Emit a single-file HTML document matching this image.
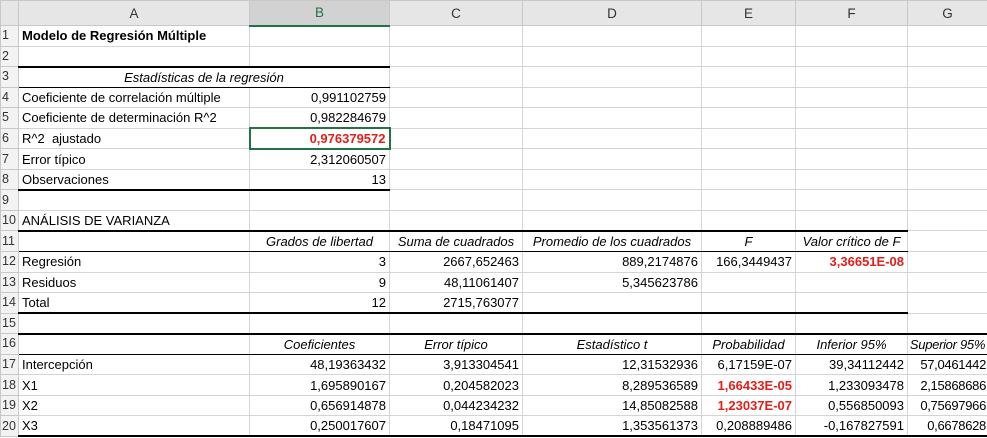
<!DOCTYPE html>
<html><head><meta charset="utf-8"><style>
body{margin:0;background:#fff;}
table{border-collapse:collapse;table-layout:fixed;width:987px;font-family:"Liberation Sans",sans-serif;font-size:13px;color:#000;}
tr{height:20.55px}
td{border:1px solid #d4d4d4;padding:0 3px;white-space:nowrap;overflow:visible;line-height:17px;box-sizing:border-box;}
tr.h{height:25px}
tr.h td{background:#e6e6e6;text-align:center;color:#333;border-color:#c8c8c8;font-size:13.5px;}
tr.h td.sel{background:#d2d2d2;color:#217346;border-bottom:2px solid #217346;}
td.n{background:#f3f3f3;color:#333;padding:0 1px;font-size:12.5px;border-color:#c8c8c8;}
.r{text-align:right}.c{text-align:center}.i{font-style:italic}.b{font-weight:bold}.red{color:#e0201b;font-weight:bold}
.tb{border-bottom:2px solid #000}.t1{border-bottom:1px solid #000}
.g{border:2px solid #217346}
.sp{padding:0 1px;letter-spacing:-0.3px}
</style></head><body>
<table>
<colgroup><col style="width:18px"><col style="width:231px"><col style="width:140px"><col style="width:133px"><col style="width:179px"><col style="width:94px"><col style="width:112px"><col style="width:80px"></colgroup>
<tr class="h"><td></td><td>A</td><td class="sel">B</td><td>C</td><td>D</td><td>E</td><td>F</td><td>G</td></tr>
<tr><td class="n">1</td><td class="b">Modelo de Regresión Múltiple</td><td></td><td></td><td></td><td></td><td></td><td></td></tr>
<tr><td class="n">2</td><td class="tb"></td><td class="tb"></td><td></td><td></td><td></td><td></td><td></td></tr>
<tr><td class="n">3</td><td colspan="2" class="c i t1">Estadísticas de la regresión</td><td></td><td></td><td></td><td></td><td></td></tr>
<tr><td class="n">4</td><td>Coeficiente de correlación múltiple</td><td class="r">0,991102759</td><td></td><td></td><td></td><td></td><td></td></tr>
<tr><td class="n">5</td><td>Coeficiente de determinación R^2</td><td class="r">0,982284679</td><td></td><td></td><td></td><td></td><td></td></tr>
<tr><td class="n">6</td><td>R^2 &nbsp;ajustado</td><td class="r red g">0,976379572</td><td></td><td></td><td></td><td></td><td></td></tr>
<tr><td class="n">7</td><td>Error típico</td><td class="r">2,312060507</td><td></td><td></td><td></td><td></td><td></td></tr>
<tr><td class="n">8</td><td class="tb">Observaciones</td><td class="r tb">13</td><td></td><td></td><td></td><td></td><td></td></tr>
<tr><td class="n">9</td><td></td><td></td><td></td><td></td><td></td><td></td><td></td></tr>
<tr><td class="n">10</td><td class="tb">ANÁLISIS DE VARIANZA</td><td class="tb"></td><td class="tb"></td><td class="tb"></td><td class="tb"></td><td class="tb"></td><td></td></tr>
<tr><td class="n">11</td><td class="t1"></td><td class="c i t1">Grados de libertad</td><td class="c i t1">Suma de cuadrados</td><td class="c i t1">Promedio de los cuadrados</td><td class="c i t1">F</td><td class="c i t1">Valor crítico de F</td><td></td></tr>
<tr><td class="n">12</td><td>Regresión</td><td class="r">3</td><td class="r">2667,652463</td><td class="r">889,2174876</td><td class="r">166,3449437</td><td class="r red">3,36651E-08</td><td></td></tr>
<tr><td class="n">13</td><td>Residuos</td><td class="r">9</td><td class="r">48,11061407</td><td class="r">5,345623786</td><td></td><td></td><td></td></tr>
<tr><td class="n">14</td><td class="tb">Total</td><td class="r tb">12</td><td class="r tb">2715,763077</td><td class="tb"></td><td class="tb"></td><td class="tb"></td><td></td></tr>
<tr><td class="n">15</td><td class="tb"></td><td class="tb"></td><td class="tb"></td><td class="tb"></td><td class="tb"></td><td class="tb"></td><td class="tb"></td></tr>
<tr><td class="n">16</td><td class="t1"></td><td class="c i t1">Coeficientes</td><td class="c i t1">Error típico</td><td class="c i t1">Estadístico t</td><td class="c i t1">Probabilidad</td><td class="c i t1">Inferior 95%</td><td class="c i t1 sp">Superior 95%</td></tr>
<tr><td class="n">17</td><td>Intercepción</td><td class="r">48,19363432</td><td class="r">3,913304541</td><td class="r">12,31532936</td><td class="r">6,17159E-07</td><td class="r">39,34112442</td><td class="r sp">57,0461442</td></tr>
<tr><td class="n">18</td><td>X1</td><td class="r">1,695890167</td><td class="r">0,204582023</td><td class="r">8,289536589</td><td class="r red">1,66433E-05</td><td class="r">1,233093478</td><td class="r sp">2,15868686</td></tr>
<tr><td class="n">19</td><td>X2</td><td class="r">0,656914878</td><td class="r">0,044234232</td><td class="r">14,85082588</td><td class="r red">1,23037E-07</td><td class="r">0,556850093</td><td class="r sp">0,75697966</td></tr>
<tr><td class="n">20</td><td class="tb">X3</td><td class="r tb">0,250017607</td><td class="r tb">0,18471095</td><td class="r tb">1,353561373</td><td class="r tb">0,208889486</td><td class="r tb">-0,167827591</td><td class="r tb sp">0,6678628</td></tr>
</table>
</body></html>
